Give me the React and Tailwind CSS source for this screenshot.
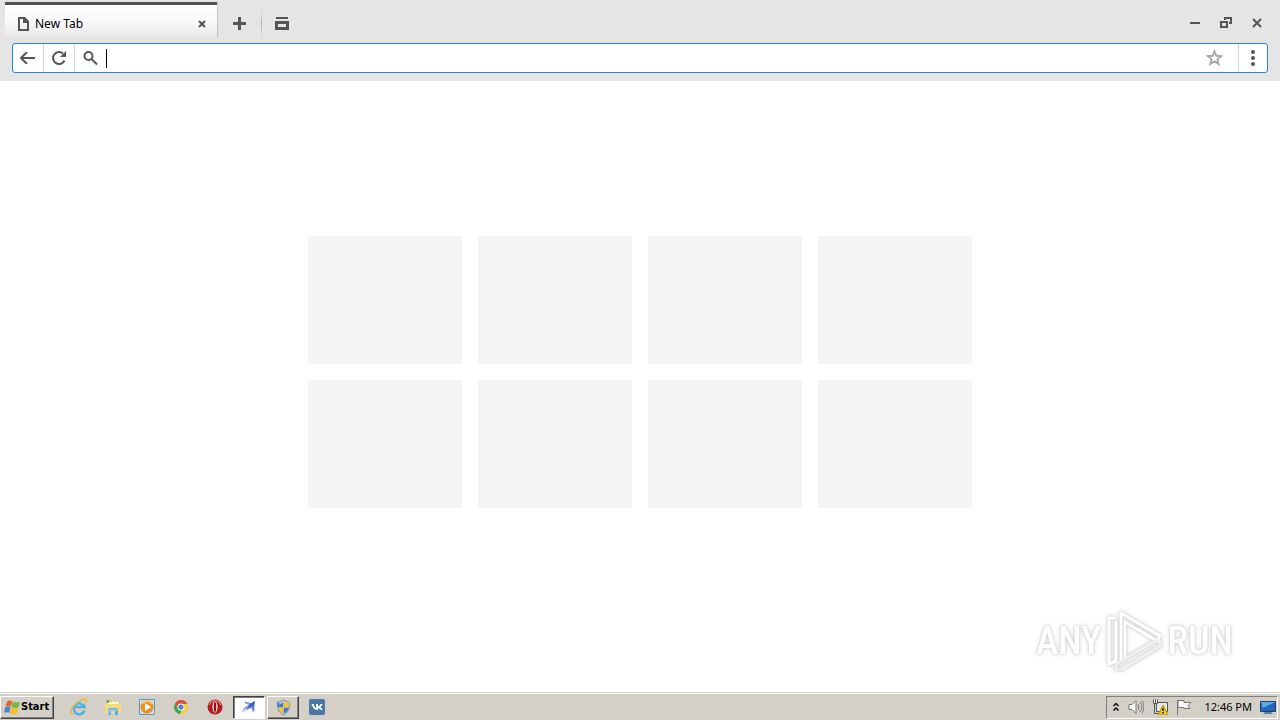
import React from "react";

const tiles = ["1", "2", "3", "4", "5", "6", "7", "8"];

function TabStrip() {
  return (
    <div className="flex h-[43px] items-start pt-[2px] pl-[5px]">
      <div className="flex h-9 w-[212px] items-center border-t-[3px] border-[#555555] bg-linear-to-b from-white via-[#f8f8f8] to-[#e8e8e8] pt-1 pr-2 pl-3 shadow-[1px_0_1px_#c4c4c4]">
        <svg className="size-[14px]" viewBox="0 0 14 14" fill="none">
          <path d="M1 0h7l4 4v10H1zM3 2v10h7V6H6V2z" fill="#555" fillRule="evenodd" />
        </svg>
        <span className="ml-1 grow font-['Noto_Sans',sans-serif] text-xs leading-4 text-black">New Tab</span>
        <button aria-label="Close tab" className="flex size-[14px] items-center justify-center">
          <svg className="size-2" viewBox="0 0 8 8" stroke="#555" strokeWidth="2"><path d="M1 1l6 6M7 1l-6 6" /></svg>
        </button>
      </div>
      <button aria-label="Open new tab" className="flex h-[43px] w-11 items-center justify-center">
        <svg className="size-[13px]" viewBox="0 0 13 13" stroke="#555" strokeWidth="3"><path d="M0 6.500h13M6.500 0v13" /></svg>
      </button>
      <div className="mt-2 h-7 w-px bg-linear-to-b from-[#e5e5e5] via-[#b0b0b0] to-[#e5e5e5]" />
      <button aria-label="Tab list" className="flex h-[43px] w-10 items-center justify-center">
        <svg className="h-[13px] w-[14px]" viewBox="0 0 14 13" fill="none" stroke="#555">
          <path d="M1 1h12" strokeWidth="2" />
          <path d="M1.500 5.500h11v6h-11z" strokeWidth="3" />
        </svg>
      </button>
      <div className="ml-auto flex h-[41px] items-center gap-[7px] pr-[11px]">
        <button aria-label="Minimize" className="flex size-6 items-center justify-center">
          <svg className="size-[10px]" viewBox="0 0 10 10" stroke="#555" strokeWidth="2"><path d="M0 5h10" /></svg>
        </button>
        <button aria-label="Restore" className="flex size-6 items-center justify-center">
          <svg className="size-3" viewBox="0 0 12 12" fill="none" stroke="#555" strokeWidth="2"><path d="M1 5h6v5H1zM5 3V1h6v5H9" /></svg>
        </button>
        <button aria-label="Close" className="flex size-6 items-center justify-center">
          <svg className="size-[10px]" viewBox="0 0 10 10" stroke="#555" strokeWidth="2"><path d="M1 1l8 8M9 1l-8 8" /></svg>
        </button>
      </div>
    </div>
  );
}

function AddressBar() {
  return (
    <div className="mx-3 mb-2 flex h-[30px] items-center rounded-[3px] border border-[#2488c9] bg-white">
      <button aria-label="Back" className="flex h-7 w-[31px] items-center justify-center border-r border-[#d4d4d4]">
        <svg className="h-3 w-4" viewBox="0 0 16 12" fill="none" stroke="#555" strokeWidth="2"><path d="M15 6H1M7 0L1 6l6 6" /></svg>
      </button>
      <button aria-label="Reload" className="flex h-7 w-[31px] items-center justify-center border-r border-[#d4d4d4]">
        <svg className="size-4" viewBox="0 0 16 16" fill="none" stroke="#555" strokeWidth="2">
          <path d="M13.500 10.500A6 6 0 1 1 12 3.500" />
          <path d="M15 1v6H9z" fill="#555" stroke="none" />
        </svg>
      </button>
      <label htmlFor="address" className="flex w-[31px] justify-center">
        <svg className="size-4" viewBox="0 0 16 16" fill="none" stroke="#555" strokeWidth="2"><circle cx="5.500" cy="6" r="4" /><path d="M8.500 9l5.500 5.500" /></svg>
      </label>
      <div className="h-[19px] w-px bg-black" />
      <input id="address" aria-label="Address" type="text" className="h-7 min-w-0 grow bg-transparent px-1 text-sm outline-none" />
      <button aria-label="Bookmark page" className="flex h-7 w-12 items-center justify-center border-r border-[#d4d4d4]">
        <svg className="size-[18px]" viewBox="0 0 18 18" fill="none" stroke="#aaa" strokeWidth="2"><path d="M8.500 2.500l1.800 4.300 4.700.4-3.600 3.100 1.100 4.600-4-2.500-4 2.500 1.100-4.600L2 7.200l4.700-.4z" /></svg>
      </button>
      <button aria-label="Menu" className="flex h-7 w-7 items-center justify-center">
        <svg className="h-4 w-1" viewBox="0 0 4 16" fill="#555"><circle cx="2" cy="2" r="2" /><circle cx="2" cy="8" r="2" /><circle cx="2" cy="14" r="2" /></svg>
      </button>
    </div>
  );
}

function Watermark() {
  return (
    <div className="absolute right-[47px] bottom-5 flex items-center gap-1 font-['Roboto_Condensed','Open_Sans_Condensed','Liberation_Sans',sans-serif] text-[38px] font-medium text-white [filter:drop-shadow(0_0_1px_#c8c8c8)_drop-shadow(0_0_2px_#ddd)]">
      <span>ANY</span>
      <svg className="h-[62px] w-[58px]" viewBox="0 0 58 62" fill="none" stroke="#fff" strokeWidth="3" strokeLinejoin="round">
        <path d="M16 3L55 26l-3 5L20 12v36l-4 3z" />
        <path d="M10 8H4v46l7-3V11" />
        <path d="M50 31L11 54v5h6l38-23v-5z" stroke="#f0f0f0" />
      </svg>
      <span>RUN</span>
    </div>
  );
}

function WindowsFlag() {
  return (
    <svg className="size-[17px] shrink-0" viewBox="0 0 16 16">
      <path d="M3 2q2-1 5 0L6.500 7Q4 6 1.500 7z" fill="#e8632b" />
      <path d="M8.500 2.500q3 1.500 6.500 0L13.500 8Q11 9 7 7.500z" fill="#74b743" />
      <path d="M1.200 7.500q2.500-1 5 0L5 13q-3-1-5 0z" fill="#4387d2" />
      <path d="M6.900 8q3 1.500 6.300.5L12 14q-3 1-6.500-.5z" fill="#f3bd2e" />
    </svg>
  );
}

function InternetExplorer() {
  return (
    <svg className="size-[18px]" viewBox="0 0 18 18" fill="none">
      <path d="M14.500 12.500A5.500 5.500 0 1 1 14.500 9H5" stroke="#4fb0e4" strokeWidth="2.500" />
      <path d="M4 8.500A5 5 0 0 1 13 6" stroke="#8bd9f5" />
      <path d="M3 16C-1 17 1 9 8 4c5-4 10-4 8 1" stroke="#e5b52f" strokeWidth="1.500" />
    </svg>
  );
}

function Explorer() {
  return (
    <svg className="size-[18px]" viewBox="0 0 18 18">
      <path d="M2 2h5l1 2h8v10H2z" fill="#e0c05c" />
      <path d="M3 4h12v3H3z" fill="#fff5c7" />
      <path d="M3 2h2v3H3z" fill="#4cae58" />
      <path d="M1 6h16v9H1z" fill="#f5dc80" />
      <path d="M4 17v-5q0-2 2-2h6q2 0 2 2v5h-3v-4H7v4z" fill="#59aedb" />
      <path d="M5 16v-4h8" fill="none" stroke="#b9e7f5" />
    </svg>
  );
}

function MediaPlayer() {
  return (
    <svg className="size-[18px]" viewBox="0 0 18 18">
      <path d="M1.500 1.500h15v15h-15z" fill="#c4dfee" stroke="#6798b5" />
      <circle cx="9" cy="9" r="6.500" fill="#ef8e1b" />
      <path d="M4 6a6 6 0 0 1 10 0" fill="none" stroke="#ffc66d" strokeWidth="1.500" />
      <path d="M7 5l6 4-6 4z" fill="#fff" />
    </svg>
  );
}

function Chrome() {
  return (
    <svg className="size-4" viewBox="0 0 16 16">
      <circle cx="8" cy="8" r="7" fill="#fbce38" />
      <path d="M2 4.400A7 7 0 0 1 14.300 5H8L5 9z" fill="#dc4b3e" />
      <path d="M2 4.400L5.500 10l3 .7L7 15A7 7 0 0 1 2 4.400z" fill="#3aa55b" />
      <circle cx="8" cy="8" r="3.500" fill="#fff" />
      <circle cx="8" cy="8" r="2.600" fill="#4685d6" />
    </svg>
  );
}

function Opera() {
  return (
    <svg className="size-4" viewBox="0 0 16 16">
      <circle cx="8" cy="8" r="7.500" fill="#b51c20" />
      <path d="M2 6a6.500 6.500 0 0 1 12 0" fill="none" stroke="#df6d68" strokeWidth="1.500" />
      <ellipse cx="8" cy="8" rx="2.500" ry="5.500" fill="#fff" />
      <ellipse cx="8" cy="8" rx="1.300" ry="5" fill="#8e1014" />
    </svg>
  );
}

function Plane() {
  return (
    <svg className="size-4" viewBox="0 0 16 16">
      <path d="M14 2L10 4 4 2.500 3.500 4 8 6 3 9l-2 4 5-2 4-2 2 4 1.500-1V7z" fill="#7799df" />
      <path d="M14 2L9 5l-3 4 4-1 2-1 1 4V6z" fill="#365fbd" />
      <path d="M0 14l5-5 1 3z" fill="#d8e3f8" />
    </svg>
  );
}

function Shield() {
  return (
    <svg className="size-[17px]" viewBox="0 0 16 16">
      <path d="M8 1q3 2 6 2 0 9-6 12Q2 12 2 3q3 0 6-2z" fill="#eef4fc" stroke="#8796a8" />
      <path d="M8 2v6H2.700Q2 6 2.500 3.500 6 3.500 8 2zM8 8h5q-1 4-5 6z" fill="#3b79cf" />
      <path d="M8 2q2 1.500 5.500 1.500.4 2-.5 4.500H8zM3 8h5v6Q4 12 3 8z" fill="#f3c331" />
      <path d="M4 5q2-2 4-2" fill="none" stroke="#b7d7ff" />
    </svg>
  );
}

function Vk() {
  return (
    <svg className="size-4" viewBox="0 0 16 16">
      <rect width="16" height="16" rx="2" fill="#4b77a8" />
      <path d="M2.500 5h2q1 3 2.500 4V5h2v2.500Q10.500 7 11.500 5h2Q13 7 11.300 8.200 13 9 13.800 11h-2Q11 9.500 9 9v2H8Q4 10.500 2.500 5z" fill="#fff" />
    </svg>
  );
}

const launchers = [
  ["Internet Explorer", InternetExplorer],
  ["File Explorer", Explorer],
  ["Media Player", MediaPlayer],
  ["Chrome", Chrome],
  ["Opera", Opera],
];

function Taskbar() {
  return (
    <footer className="flex h-7 shrink-0 items-center border-t border-[#d4d0c8] bg-[#d4d0c8] pt-px shadow-[inset_0_1px_0_white]">
      <button className="flex h-[23px] w-[54px] items-center border border-t-white border-r-[#404040] border-b-[#404040] border-l-white pl-[3px] font-['DejaVu_Sans_Condensed','DejaVu_Sans',sans-serif] text-[11px] font-bold shadow-[inset_-1px_-1px_#808080]">
        <WindowsFlag />
        Start
      </button>
      <div className="ml-2 flex">
        {launchers.map(([name, Icon]) => (
          <button key={name} aria-label={name} className="flex h-6 w-[34px] items-center justify-center"><Icon /></button>
        ))}
      </div>
      <button aria-label="Browser" className="ml-px flex h-[23px] w-8 items-center justify-center border border-t-[#404040] border-r-white border-b-white border-l-[#404040] bg-white shadow-[inset_1px_1px_#808080]"><Plane /></button>
      <button aria-label="Security" className="ml-[2px] flex h-[23px] w-8 items-center justify-center border border-t-white border-r-[#404040] border-b-[#404040] border-l-white shadow-[inset_-1px_-1px_#808080]"><Shield /></button>
      <button aria-label="VK" className="flex h-6 w-9 items-center justify-center"><Vk /></button>
      <div className="mr-[2px] ml-auto flex h-[23px] items-center border border-t-[#808080] border-r-white border-b-white border-l-[#808080] pl-[5px]">
        <button aria-label="Show hidden icons">
          <svg className="h-[10px] w-2" viewBox="0 0 8 10" fill="none" stroke="#111" strokeWidth="1.500"><path d="M1.500 4L4 1.500 6.500 4M1.500 8.500L4 6l2.500 2.500" /></svg>
        </button>
        <button aria-label="Volume" className="ml-2">
          <svg className="size-4" viewBox="0 0 16 16" fill="none" stroke="#777"><path d="M1 5.500h3l4-4v13l-4-4H1z" fill="#f5f5f5" /><path d="M10 5q2 3 0 6M12 3q4 5 0 10M14 1.500q4 6.500 0 13" /></svg>
        </button>
        <button aria-label="Network" className="ml-2">
          <svg className="size-4" viewBox="0 0 16 16" fill="none"><path d="M4.500 3.500h11v9h-11z" fill="#e8e8e8" stroke="#555" /><path d="M1 1h5v4H1z" fill="#eee" /><path d="M1.500.500v4h4v-4M3.500.500v4M2.500 5v9.500h5" stroke="#555" /><path d="M11 6l5 10H6z" fill="#f2c819" stroke="#b99008" /><path d="M11 9v3M11 13v1.500" stroke="#222" strokeWidth="1.500" /></svg>
        </button>
        <button aria-label="Action Center" className="ml-2">
          <svg className="size-4" viewBox="0 0 16 16" fill="#fafafa" stroke="#777"><path d="M1.500 1v15" /><path d="M2 1.500h6v2h7l-3 3 2 3H8v-1H2z" /></svg>
        </button>
        <time className="ml-3 font-['Noto_Sans',sans-serif] text-[11px] leading-4 text-black">12:46 PM</time>
        <button aria-label="Show desktop" className="mx-2 mr-px">
          <svg className="size-4" viewBox="0 0 16 16"><path d="M.500 2.500h15v10H.500z" fill="#2465bd" stroke="#244067" /><path d="M1 3h14L3 9z" fill="#5eaae5" /><path d="M5 13h6l2 2H3z" fill="#647b92" /></svg>
        </button>
      </div>
    </footer>
  );
}

export default function App() {
  return (
    <div className="flex h-screen flex-col bg-white">
      <header className="shrink-0 bg-[#e5e5e5]">
        <TabStrip />
        <AddressBar />
      </header>
      <main className="relative flex grow justify-center px-4 pt-[155px]">
        <div className="grid w-full max-w-[664px] auto-rows-[128px] grid-cols-4 gap-4">
          {tiles.map((tile) => <div key={tile} className="rounded-[1px] bg-[#f5f5f5]" />)}
        </div>
        <Watermark />
      </main>
      <Taskbar />
    </div>
  );
}
